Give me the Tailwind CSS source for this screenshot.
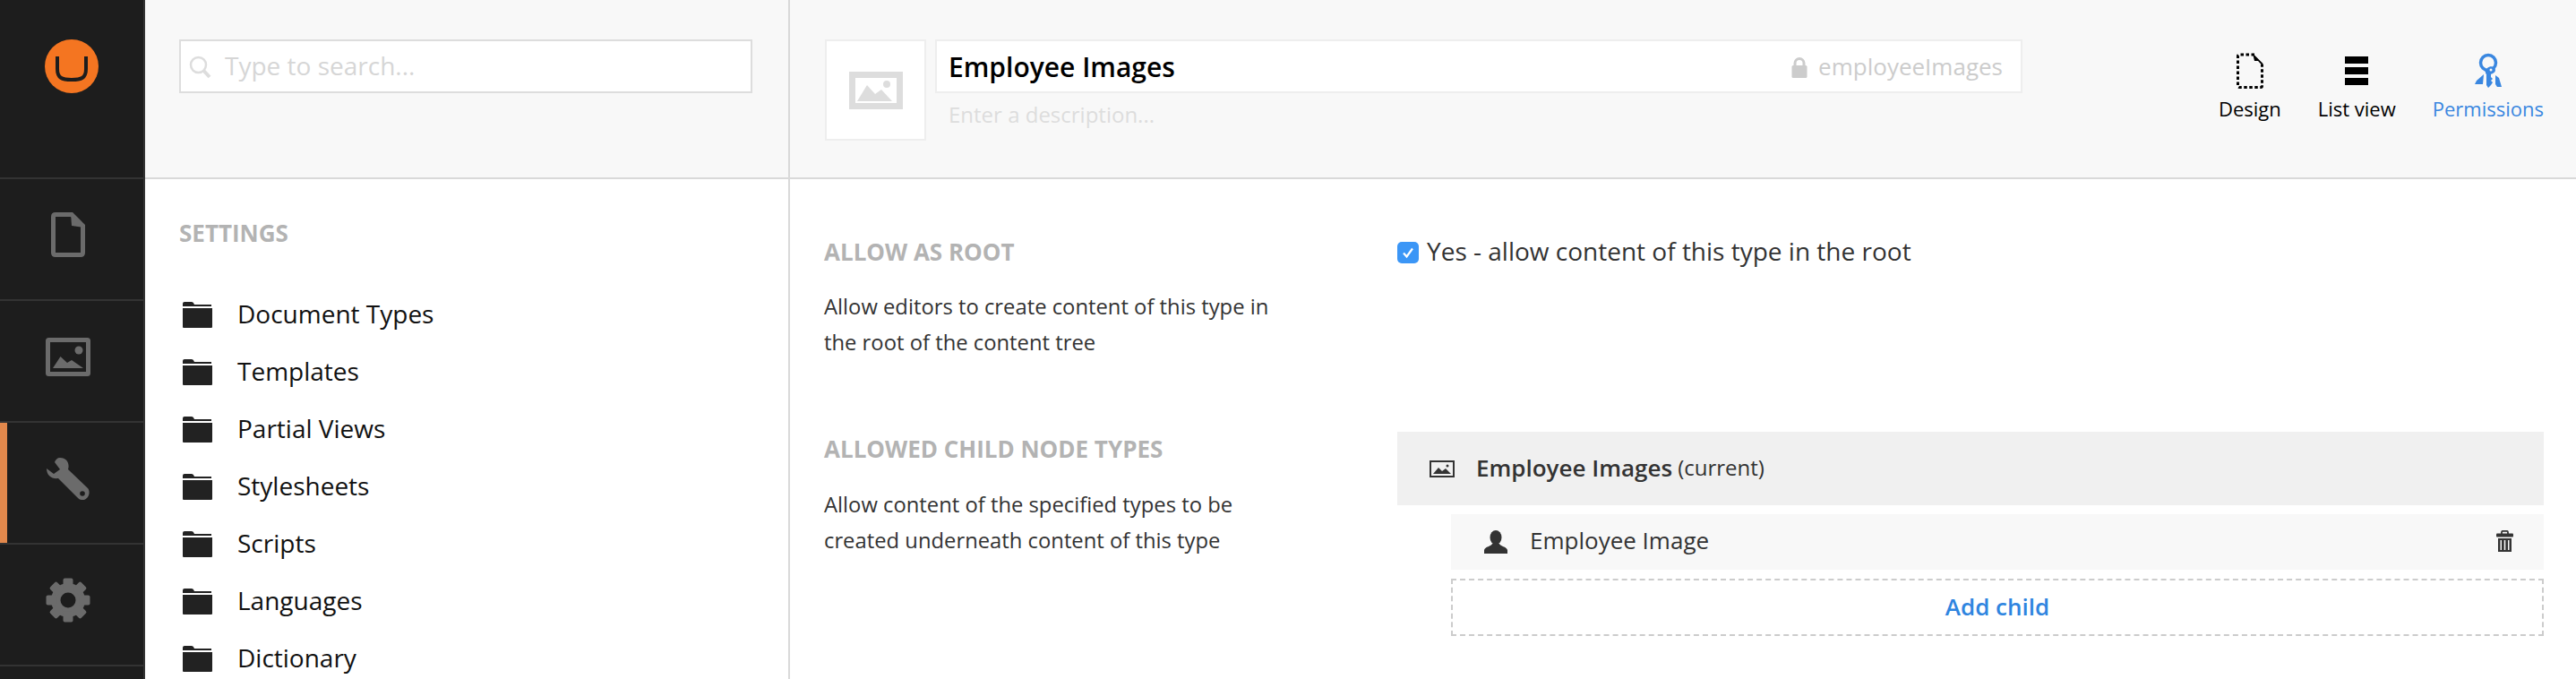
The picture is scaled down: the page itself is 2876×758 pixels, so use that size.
<!doctype html>
<html lang="en">
<head>
    <meta charset="UTF-8" />
    <title>Employee Images</title>
    <script src="https://cdn.jsdelivr.net/npm/@tailwindcss/browser@4"></script>
</head>
<body class="font-['Open_Sans',sans-serif] bg-white overflow-hidden">
<div class="flex h-[758px] w-[2876px] overflow-hidden">

    <!-- Section nav -->
    <nav class="w-[162px] shrink-0 bg-[#1d1d1d] border-r-2 border-[#333333]">
        <div class="h-[198px] flex items-start justify-center pt-[44px]">
            <svg width="60" height="60" viewBox="0 0 60 60">
                <circle cx="30" cy="30" r="30" fill="#f47521" />
                <path d="M14 19 V33 C14 43 19 45 30 45 C41 45 46 43 46 33 V19" fill="none" stroke="#1d1d1d" stroke-width="4" />
            </svg>
        </div>
        <div class="h-[136px] border-t-2 border-[#333333] flex items-center justify-center pr-[8px]">
            <svg width="38" height="50" viewBox="0 0 38 50" class="mt-[-10px]">
                <path d="M5 2.500 H23 L35.500 15 V45 Q35.500 47.500 33 47.500 H5 Q2.500 47.500 2.500 45 V5 Q2.500 2.500 5 2.500 Z" fill="none" stroke="#6b6b6b" stroke-width="5" />
                <path d="M22 1 L37 15 V17 L23 15 Z" fill="#6b6b6b" />
            </svg>
        </div>
        <div class="h-[136px] border-t-2 border-[#333333] flex items-center justify-center pr-[8px]">
            <svg width="50" height="43" viewBox="0 0 50 43" class="mt-[-10px]">
                <rect x="2.500" y="2.500" width="45" height="38" rx="1" fill="none" stroke="#6b6b6b" stroke-width="5" />
                <circle cx="37" cy="14" r="4.500" fill="#6b6b6b" />
                <path d="M8 34 L16.500 21 L24 28 L29 25 L42 34 Z" fill="#6b6b6b" />
            </svg>
        </div>
        <div class="relative h-[136px] border-t-2 border-[#333333] flex items-center justify-center pr-[8px]">
            <div class="absolute left-0 top-0 bottom-0 w-[8px] bg-[#e2884c]"></div>
            <svg width="48" height="48" viewBox="0 0 48 48" class="mt-[-8px]">
                <path d="M15 0 C23 0 26 7 24 13 L46 34 C50 39 46 48 39 47 C37 47 36 46 34 44 L13 23 C6 24 0 20 0 12 L8 18 L15 13 L9 5 C10 2 12 0 15 0 Z" fill="#6b6b6b" />
                <circle cx="40" cy="40" r="2.800" fill="#1d1d1d" />
            </svg>
        </div>
        <div class="h-[136px] border-t-2 border-[#333333] flex items-center justify-center pr-[8px]">
            <svg width="50" height="50" viewBox="0 0 50 50" class="mt-[-10px]">
                <g fill="#6b6b6b">
                    <circle cx="25" cy="25" r="19" />
                    <rect x="19.500" y="0.500" width="11" height="12" rx="2" />
                    <rect x="19.500" y="0.500" width="11" height="12" rx="2" transform="rotate(45 25 25)" />
                    <rect x="19.500" y="0.500" width="11" height="12" rx="2" transform="rotate(90 25 25)" />
                    <rect x="19.500" y="0.500" width="11" height="12" rx="2" transform="rotate(135 25 25)" />
                    <rect x="19.500" y="0.500" width="11" height="12" rx="2" transform="rotate(180 25 25)" />
                    <rect x="19.500" y="0.500" width="11" height="12" rx="2" transform="rotate(225 25 25)" />
                    <rect x="19.500" y="0.500" width="11" height="12" rx="2" transform="rotate(270 25 25)" />
                    <rect x="19.500" y="0.500" width="11" height="12" rx="2" transform="rotate(315 25 25)" />
                </g>
                <circle cx="25" cy="25" r="8.500" fill="#1d1d1d" />
            </svg>
        </div>
        <div class="h-[20px] border-t-2 border-[#333333]"></div>
    </nav>

    <!-- Tree panel -->
    <aside class="w-[720px] shrink-0 border-r-2 border-[#d9d9d9]">
        <div class="h-[200px] bg-[#f8f8f8] border-b-2 border-[#d9d9d9] pl-[38px] pt-[44px]">
            <div class="w-[640px] h-[60px] bg-white border-2 border-[#dddddd] flex items-center pl-[9px]">
                <svg width="26" height="26" viewBox="0 0 26 26" class="mt-[2px]">
                    <circle cx="10.500" cy="10.500" r="8.500" fill="none" stroke="#dddddd" stroke-width="2.500" />
                    <path d="M16.500 17 L23 24" stroke="#dddddd" stroke-width="4" />
                </svg>
                <span class="ml-[14px] mt-[-2px] text-[28px] leading-[36px] text-[#d6d6d6]">Type to search...</span>
            </div>
        </div>
        <div class="pl-[38px] pt-[42px]">
            <h2 class="text-[26px] leading-[36px] font-bold text-[#b3b3b3] uppercase">Settings</h2>
            <ul class="mt-[40px] text-[28px] text-[#111111]">
                <li class="h-[64px] flex items-center">
                    <svg width="34" height="29" viewBox="0 0 34 29" class="ml-[3px] mt-[2px]"><path d="M1 6 V2 Q1 0 3 0 H11 Q13 0 14 3 H33 V5 H1 Z M1 7 H34 V28 Q34 29 33 29 H2 Q1 29 1 28 Z" fill="#222222" /></svg>
                    <span class="ml-[28px]">Document Types</span>
                </li>
                <li class="h-[64px] flex items-center">
                    <svg width="34" height="29" viewBox="0 0 34 29" class="ml-[3px] mt-[2px]"><path d="M1 6 V2 Q1 0 3 0 H11 Q13 0 14 3 H33 V5 H1 Z M1 7 H34 V28 Q34 29 33 29 H2 Q1 29 1 28 Z" fill="#222222" /></svg>
                    <span class="ml-[28px]">Templates</span>
                </li>
                <li class="h-[64px] flex items-center">
                    <svg width="34" height="29" viewBox="0 0 34 29" class="ml-[3px] mt-[2px]"><path d="M1 6 V2 Q1 0 3 0 H11 Q13 0 14 3 H33 V5 H1 Z M1 7 H34 V28 Q34 29 33 29 H2 Q1 29 1 28 Z" fill="#222222" /></svg>
                    <span class="ml-[28px]">Partial Views</span>
                </li>
                <li class="h-[64px] flex items-center">
                    <svg width="34" height="29" viewBox="0 0 34 29" class="ml-[3px] mt-[2px]"><path d="M1 6 V2 Q1 0 3 0 H11 Q13 0 14 3 H33 V5 H1 Z M1 7 H34 V28 Q34 29 33 29 H2 Q1 29 1 28 Z" fill="#222222" /></svg>
                    <span class="ml-[28px]">Stylesheets</span>
                </li>
                <li class="h-[64px] flex items-center">
                    <svg width="34" height="29" viewBox="0 0 34 29" class="ml-[3px] mt-[2px]"><path d="M1 6 V2 Q1 0 3 0 H11 Q13 0 14 3 H33 V5 H1 Z M1 7 H34 V28 Q34 29 33 29 H2 Q1 29 1 28 Z" fill="#222222" /></svg>
                    <span class="ml-[28px]">Scripts</span>
                </li>
                <li class="h-[64px] flex items-center">
                    <svg width="34" height="29" viewBox="0 0 34 29" class="ml-[3px] mt-[2px]"><path d="M1 6 V2 Q1 0 3 0 H11 Q13 0 14 3 H33 V5 H1 Z M1 7 H34 V28 Q34 29 33 29 H2 Q1 29 1 28 Z" fill="#222222" /></svg>
                    <span class="ml-[28px]">Languages</span>
                </li>
                <li class="h-[64px] flex items-center">
                    <svg width="34" height="29" viewBox="0 0 34 29" class="ml-[3px] mt-[2px]"><path d="M1 6 V2 Q1 0 3 0 H11 Q13 0 14 3 H33 V5 H1 Z M1 7 H34 V28 Q34 29 33 29 H2 Q1 29 1 28 Z" fill="#222222" /></svg>
                    <span class="ml-[28px]">Dictionary</span>
                </li>
            </ul>
        </div>
    </aside>

    <!-- Editor -->
    <main class="flex-1 min-w-0">
        <header class="h-[200px] bg-[#f8f8f8] border-b-2 border-[#d9d9d9] flex items-start pl-[39px] pr-[36px] pt-[44px]">
            <div class="w-[113px] h-[113px] bg-white border-2 border-[#eeeeee] flex items-center justify-center">
                <svg width="60" height="42" viewBox="0 0 60 42">
                    <rect x="3.500" y="3.500" width="53" height="35" fill="none" stroke="#dddddd" stroke-width="7" />
                    <circle cx="42" cy="14" r="4" fill="#dddddd" />
                    <path d="M9 33 L20 15 L29 25 L36 20 L48 33 Z" fill="#dddddd" />
                </svg>
            </div>
            <div class="ml-[10px]">
                <div class="w-[1214px] h-[60px] bg-white border-2 border-[#eeeeee] flex items-center pl-[13px] pr-[20px]">
                    <span class="text-[30px] font-semibold text-black">Employee Images</span>
                    <svg width="18" height="23" viewBox="0 0 18 23" class="ml-auto mt-[2px]">
                        <path d="M4 10 V6.500 A5 5 0 0 1 14 6.500 V10" fill="none" stroke="#cccccc" stroke-width="3" />
                        <rect x="0.500" y="9" width="17" height="14" rx="1.500" fill="#cccccc" />
                    </svg>
                    <span class="ml-[12px] text-[26px] text-[#cccccc]">employeeImages</span>
                </div>
                <p class="mt-[6px] pl-[15px] text-[24px] leading-[36px] text-[#dddddd]">Enter a description...</p>
            </div>
            <div class="ml-auto flex gap-[41px] text-[22px] leading-[32px] text-black">
                <div class="flex flex-col items-center pt-[15px]">
                    <svg width="30" height="40" viewBox="0 0 30 40" class="h-[40px]">
                        <path d="M20 2 H3 a1.500 1.500 0 0 0 -1.500 1.500 V37 a1.500 1.500 0 0 0 1.500 1.500 H27 a1.500 1.500 0 0 0 1.500 -1.500 V13" fill="none" stroke="#000000" stroke-width="3" stroke-dasharray="3.500 2.500" />
                        <path d="M18 0.500 L29.500 12 V15 L24 9 H20 Z" fill="#000000" />
                    </svg>
                    <span class="mt-[6px]">Design</span>
                </div>
                <div class="flex flex-col items-center pt-[15px]">
                    <div class="h-[40px] flex flex-col justify-center gap-[4px]">
                        <div class="w-[26px] h-[8px] bg-black"></div>
                        <div class="w-[26px] h-[8px] bg-black"></div>
                        <div class="w-[26px] h-[8px] bg-black"></div>
                    </div>
                    <span class="mt-[6px]">List view</span>
                </div>
                <div class="flex flex-col items-center pt-[15px] text-[#3a87e0]">
                    <svg width="30" height="40" viewBox="0 0 30 40" class="h-[40px]">
                        <circle cx="15" cy="11" r="8.500" fill="none" stroke="#3a87e0" stroke-width="3.500" />
                        <path d="M14 17 C17 14 23 15 23 19 C23 22 20 23 18 24 V27 L20 29 L18 31 L20 33 L18 36 L15 39 L13 36 V24 C11 22 12 19 14 17 Z" fill="#3a87e0" />
                        <circle cx="18" cy="19" r="1.500" fill="#f8f8f8" />
                        <path d="M10 24 L2 31 L0 35 L9 35 Z" fill="#3a87e0" />
                        <path d="M23 25 L27 28 L30 38 L25 38 L23 35 Z" fill="#3a87e0" />
                    </svg>
                    <span class="mt-[6px]">Permissions</span>
                </div>
            </div>
        </header>

        <div class="pl-[38px] pr-[36px]">
            <section class="flex h-[282px] pt-[63px]">
                <div class="w-[640px] shrink-0">
                    <h3 class="text-[26px] leading-[36px] font-bold text-[#b3b3b3] uppercase">Allow as root</h3>
                    <p class="mt-[23px] text-[23.8px] leading-[40px] text-[#333333] w-[520px]">Allow editors to create content of this type in the root of the content tree</p>
                </div>
                <label class="flex items-start h-[36px]">
                    <span class="mt-[7px] w-[24px] h-[24px] rounded-[5px] bg-[#3b96f6] flex items-center justify-center">
                        <svg width="16" height="16" viewBox="0 0 16 16"><path d="M3 8.500 L6.500 12.500 L13 3.500" fill="none" stroke="#ffffff" stroke-width="2.200" /></svg>
                    </span>
                    <span class="ml-[9px] mt-[-1px] text-[28px] leading-[36px] text-[#333333]">Yes - allow content of this type in the root</span>
                </label>
            </section>
            <section class="flex">
                <div class="w-[640px] shrink-0 pt-[1px]">
                    <h3 class="text-[26px] leading-[36px] font-bold text-[#b3b3b3] uppercase">Allowed child node types</h3>
                    <p class="mt-[24px] text-[23.8px] leading-[40px] text-[#333333] w-[520px]">Allow content of the specified types to be created underneath content of this type</p>
                </div>
                <div class="flex-1 min-w-0 text-[#333333]">
                    <div class="h-[82px] bg-[#f0f0f0] flex items-center pl-[36px]">
                        <svg width="28" height="19" viewBox="0 0 28 19">
                            <rect x="1" y="1" width="26" height="17" fill="none" stroke="#333333" stroke-width="2" />
                            <path d="M4 15 L10 8 L14 12 L18 9 L24 15 Z" fill="#333333" />
                            <circle cx="20" cy="6" r="1.500" fill="#333333" />
                        </svg>
                        <span class="ml-[24px] mt-[-2px] text-[26px] font-semibold">Employee Images</span>
                        <span class="ml-[6px] mt-[-2px] text-[24px]">(current)</span>
                    </div>
                    <div class="ml-[60px] mt-[10px] h-[62px] bg-[#f8f8f8] flex items-center pl-[37px] pr-[34px]">
                        <svg width="26" height="26" viewBox="0 0 26 26">
                            <ellipse cx="13" cy="8" rx="6.500" ry="8" fill="#333333" />
                            <path d="M9 15 H17 C18 18 25 18 26 22 V26 H0 V22 C1 18 8 18 9 15 Z" fill="#333333" />
                        </svg>
                        <span class="ml-[25px] mt-[-4px] text-[26px]">Employee Image</span>
                        <svg width="19" height="24" viewBox="0 0 19 24" class="ml-auto mt-[-2px]">
                            <path d="M6 4 V2 Q6 0.800 7.500 0.800 H11.500 Q13 0.800 13 2 V4" fill="none" stroke="#333333" stroke-width="1.800" />
                            <rect x="0" y="3.500" width="19" height="4" rx="1" fill="#333333" />
                            <path fill-rule="evenodd" d="M2 9 H17 V24 H2 Z M4.500 11 V22 H6 V11 Z M8.700 11 V22 H10.300 V11 Z M13 11 V22 H14.500 V11 Z" fill="#333333" />
                        </svg>
                    </div>
                    <button class="block ml-[60px] mt-[10px] w-[1220px] h-[64px] pb-[2px] border-2 border-dashed border-[#cccccc] text-[26px] font-semibold text-[#2f85e0]">Add child</button>
                </div>
            </section>
        </div>
    </main>
</div>
</body>
</html>
